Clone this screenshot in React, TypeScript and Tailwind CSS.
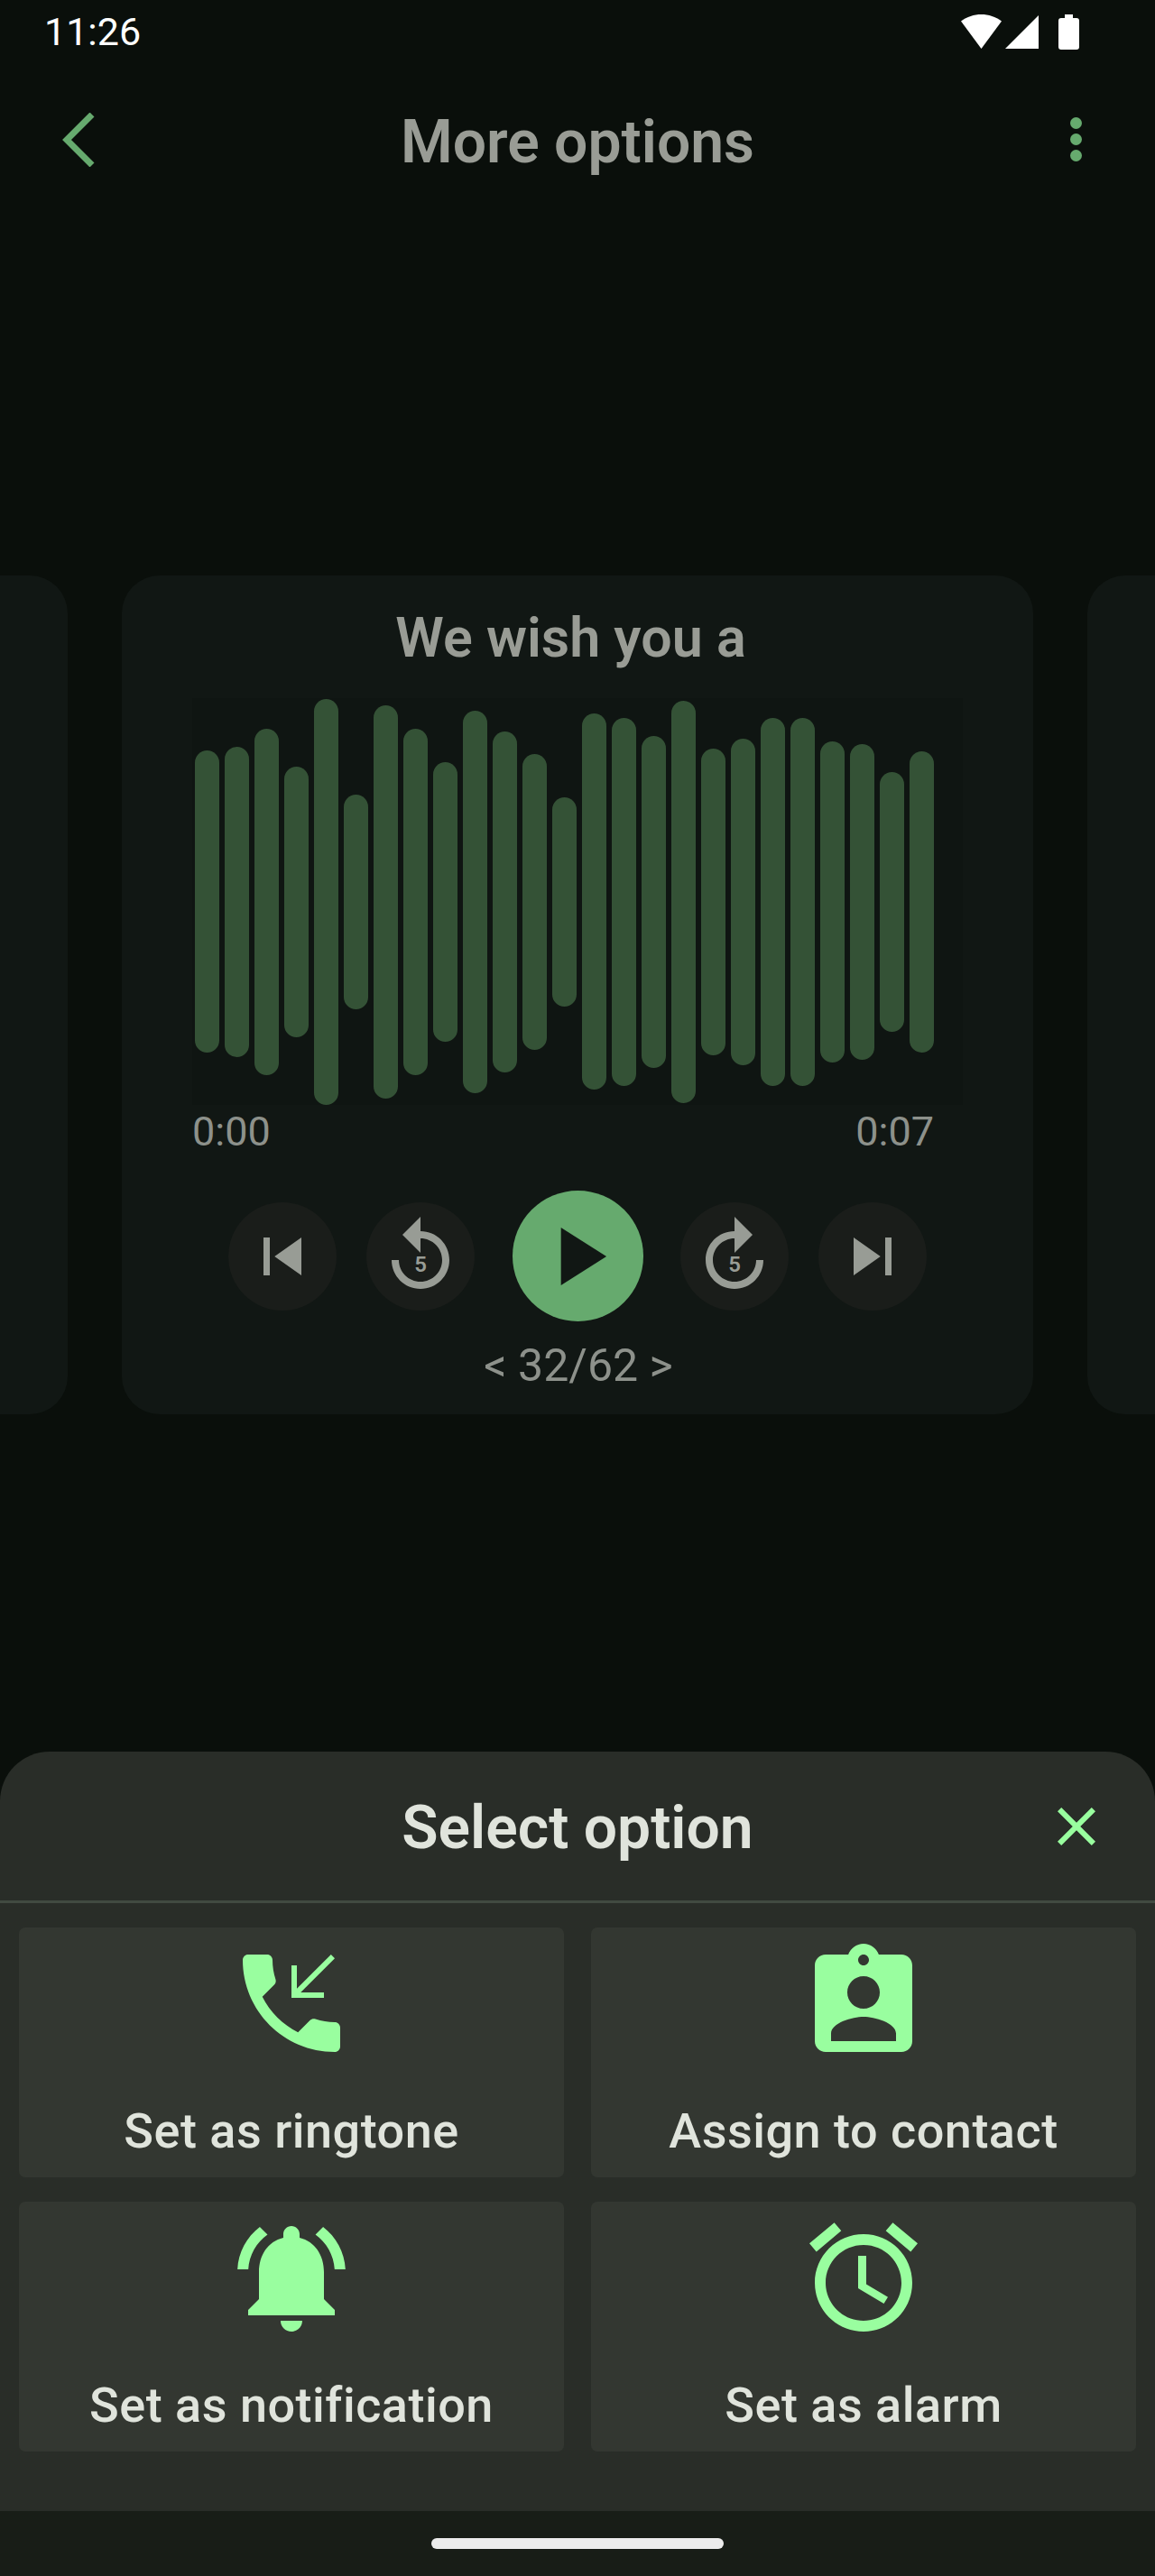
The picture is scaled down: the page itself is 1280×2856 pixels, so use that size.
const bars = [335, 344, 384, 300, 450, 238, 436, 384, 310, 424, 378, 328, 232, 417, 408, 368, 446, 340, 362, 408, 408, 356, 350, 288, 334];

const icons = {
  skipPrev: 'M6 6h2v12H6zm3.5 6l8.5 6V6z',
  skipNext: 'M6 18l8.5-6L6 6v12zM16 6v12h2V6h-2z',
  replay: 'M12 5V1L7 6l5 5V7c3.31 0 6 2.69 6 6s-2.69 6-6 6-6-2.69-6-6H4c0 4.42 3.58 8 8 8s8-3.58 8-8-3.58-8-8-8z',
  forward: 'M18 13c0 3.31-2.69 6-6 6s-6-2.69-6-6 2.69-6 6-6v4l5-5-5-5v4c-4.42 0-8 3.58-8 8s3.58 8 8 8 8-3.58 8-8h-2z',
  play: 'M8 5v14l11-7z',
  close: 'M19 6.41L17.59 5 12 10.59 6.41 5 5 6.41 10.59 12 5 17.59 6.41 19 12 13.41 17.59 19 19 17.59 13.41 12z',
  phone: 'M20 15.5c-1.25 0-2.45-.2-3.57-.57-.35-.11-.74-.03-1.02.24l-2.2 2.2c-2.83-1.44-5.15-3.75-6.59-6.59l2.2-2.21c.28-.26.36-.65.25-1C8.7 6.45 8.5 5.25 8.5 4c0-.55-.45-1-1-1H4c-.55 0-1 .45-1 1 0 9.39 7.61 17 17 17 .55 0 1-.45 1-1v-3.5c0-.55-.45-1-1-1zM20 3.7L19.3 3 13 9.3V5h-1v6h6v-1h-4.3z',
  contact: 'M19 3h-4.18C14.4 1.84 13.3 1 12 1c-1.3 0-2.4.84-2.82 2H5c-1.1 0-2 .9-2 2v14c0 1.1.9 2 2 2h14c1.1 0 2-.9 2-2V5c0-1.1-.9-2-2-2zm-7 0c.55 0 1 .45 1 1s-.45 1-1 1-1-.45-1-1 .45-1 1-1zm0 4c1.66 0 3 1.34 3 3s-1.34 3-3 3-3-1.34-3-3 1.34-3 3-3zm6 12H6v-1.4c0-2 4-3.1 6-3.1s6 1.1 6 3.1V19z',
  bell: 'M7.58 4.08L6.15 2.65C3.75 4.48 2.17 7.3 2.03 10.5h2c.15-2.65 1.51-4.97 3.55-6.42zm12.39 6.42h2c-.15-3.2-1.73-6.02-4.12-7.85l-1.42 1.43c2.02 1.45 3.39 3.77 3.54 6.42zM18 11c0-3.07-1.64-5.64-4.5-6.32V4c0-.83-.67-1.5-1.5-1.5s-1.5.67-1.5 1.5v.68C7.63 5.36 6 7.92 6 11v5l-2 2v1h16v-1l-2-2v-5zm-6 11c.14 0 .27-.01.4-.04.65-.14 1.18-.58 1.44-1.18.1-.24.15-.5.15-.78h-4c.01 1.1.9 2 2.01 2z',
  alarm: 'M22 5.72l-4.6-3.86-1.29 1.53 4.6 3.86L22 5.72zM7.88 3.39L6.6 1.86 2 5.71l1.29 1.53 4.59-3.85zM12.5 8H11v6l4.75 2.85.75-1.23-4-2.37V8zM12 4c-4.97 0-9 4.03-9 9s4.02 9 9 9c4.97 0 9-4.03 9-9s-4.03-9-9-9zm0 16c-3.87 0-7-3.13-7-7s3.13-7 7-7 7 3.13 7 7-3.13 7-7 7z',
};

function Icon({ d, className }: { d: string; className: string }) {
  return (
    <svg viewBox="0 0 24 24" fill="currentColor" className={className}>
      <path d={d} />
    </svg>
  );
}

function RoundButton({ d, five }: { d: string; five?: boolean }) {
  const size = five ? 'w-24 h-24' : 'w-[84px] h-[84px]';
  return (
    <div className="relative w-[120px] h-[120px] rounded-full bg-[#1a1d1a] flex items-center justify-center text-[#989c95]">
      <Icon d={d} className={size} />
      {five && (
        <span className="absolute left-0 right-0 top-[57px] text-center text-[24px] leading-[24px] font-semibold">5</span>
      )}
    </div>
  );
}

function OptionTile({ d, label }: { d: string; label: string }) {
  return (
    <div className="h-[277px] rounded-[7px] bg-[#333731] flex flex-col items-center pt-3">
      <Icon d={d} className="w-36 h-36 text-[#99fe9f]" />
      <div className="mt-[38px] text-[54px] leading-[64px] tracking-[0.5px] font-medium text-[#e0e4dc]">{label}</div>
    </div>
  );
}

export default function App() {
  return (
    <div className="w-[1280px] h-[2856px] overflow-hidden flex flex-col bg-[#0a0f0b] font-['Roboto',sans-serif]">
      <div className="h-[70px] shrink-0 flex items-center justify-between pl-[49px] pr-[84px] text-white">
        <span className="text-[43px] leading-[70px]">11:26</span>
        <div className="flex items-center gap-1">
          <svg viewBox="0 0 45 38" fill="currentColor" className="w-[45px] h-[38px]">
            <path d="M0 7.5C6.5 2.5 14.5 0 22.5 0S38.500 2.500 45 7.500L22.500 38z" />
          </svg>
          <svg viewBox="0 0 37 38" fill="currentColor" className="w-[37px] h-[38px]">
            <path d="M37 1v37H0z" />
          </svg>
          <svg viewBox="0 0 23 39" fill="currentColor" className="w-[23px] h-[39px] ml-[18px]">
            <path d="M7 0h9v4h4c2 0 3 1 3 3v29c0 2-1 3-3 3H3c-2 0-3-1-3-3V7c0-2 1-3 3-3h4z" />
          </svg>
        </div>
      </div>

      <div className="h-[174px] shrink-0 relative flex items-center justify-center">
        <svg viewBox="0 0 36 60" fill="none" stroke="#66aa6e" strokeWidth="7" className="absolute left-[69px] top-[55px] w-9 h-[60px]">
          <path d="M33 2L5 30l28 28" />
        </svg>
        <h1 className="mt-[2px] text-[66px] leading-[80px] font-semibold text-[#999c95]">More options</h1>
        <div className="absolute left-[1186px] top-[60px] flex flex-col gap-[5px]">
          <span className="w-[13px] h-[13px] rounded-full bg-[#66aa6e]" />
          <span className="w-[13px] h-[13px] rounded-full bg-[#66aa6e]" />
          <span className="w-[13px] h-[13px] rounded-full bg-[#66aa6e]" />
        </div>
      </div>

      <div className="flex-1 flex justify-center gap-[60px] pt-[394px]">
        <div className="w-[1010px] h-[930px] shrink-0 rounded-[42px] bg-[#111714]" />
        <div className="w-[1010px] h-[930px] shrink-0 rounded-[42px] bg-[#111714] flex flex-col items-center">
          <div className="mt-[33px] pr-[15px] text-[61px] leading-[72px] font-semibold text-[#999c95]">We wish you a</div>
          <div className="mt-[31px] w-[854px] h-[451px] bg-[#0f1512] flex items-center gap-[6px] px-[3px]">
            {bars.map((h, i) => (
              <div key={i} className="w-[27px] rounded-full bg-[#345236]" style={{ height: h }} />
            ))}
          </div>
          <div className="w-[854px] flex justify-between pr-[32px] text-[45px] leading-[50px] text-[#8d918b] mt-[5px]">
            <span>0:00</span>
            <span>0:07</span>
          </div>
          <div className="mt-[40px] h-[145px] flex items-center">
            <div className="flex gap-[33px]">
              <RoundButton d={icons.skipPrev} />
              <RoundButton d={icons.replay} five />
            </div>
            <div className="mx-[41.5px] w-[145px] h-[145px] rounded-full bg-[#66aa6e] flex items-center justify-center text-[#111714]">
              <Icon d={icons.play} className="w-[110px] h-[110px]" />
            </div>
            <div className="flex gap-[33px]">
              <RoundButton d={icons.forward} five />
              <RoundButton d={icons.skipNext} />
            </div>
          </div>
          <div className="mt-[21px] pl-[2px] text-[50px] leading-[56px] text-[#8d918b]">&lt; 32/62 &gt;</div>
        </div>
        <div className="w-[1010px] h-[930px] shrink-0 rounded-[42px] bg-[#111714]" />
      </div>

      <div className="h-[842px] shrink-0 rounded-t-[55px] bg-[#292d28] flex flex-col">
        <div className="h-[168px] shrink-0 relative flex items-center justify-center border-b-[3px] border-[#414a41]">
          <h2 className="mt-[4px] text-[66px] leading-[80px] font-semibold text-[#e0e4dc]">Select option</h2>
          <Icon d={icons.close} className="absolute left-[1157px] top-[47px] w-[72px] h-[72px] text-[#99fe9f]" />
        </div>
        <div className="mt-[27px] px-[21px] grid grid-cols-2 gap-x-[30px] gap-y-[27px]">
          <OptionTile d={icons.phone} label="Set as ringtone" />
          <OptionTile d={icons.contact} label="Assign to contact" />
          <OptionTile d={icons.bell} label="Set as notification" />
          <OptionTile d={icons.alarm} label="Set as alarm" />
        </div>
      </div>

      <div className="h-[72px] shrink-0 bg-[#181d17] flex justify-center pt-[30px]">
        <div className="w-[324px] h-3 rounded-full bg-[#ececec]" />
      </div>
    </div>
  );
}
